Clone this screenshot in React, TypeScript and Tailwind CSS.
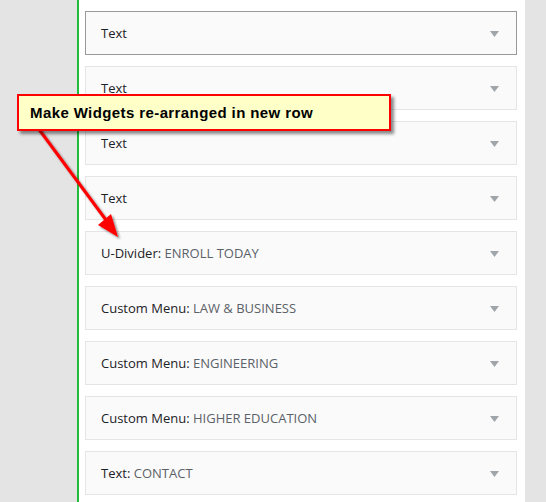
import React from "react";

const items: { title: string; sub?: string }[] = [
  { title: "Text" },
  { title: "Text" },
  { title: "Text" },
  { title: "Text" },
  { title: "U-Divider", sub: "ENROLL TODAY" },
  { title: "Custom Menu", sub: "LAW & BUSINESS" },
  { title: "Custom Menu", sub: "ENGINEERING" },
  { title: "Custom Menu", sub: "HIGHER EDUCATION" },
  { title: "Text", sub: "CONTACT" },
];

function Card({ title, sub, active }: { title: string; sub?: string; active?: boolean }) {
  return (
    <div
      className={`flex h-[44px] w-[432px] shrink-0 items-center justify-between border bg-[#fafafa] pl-[15px] pr-[17px] ${
        active ? "border-[#999999]" : "border-[#e5e5e5]"
      }`}
    >
      <div className="text-[13px] leading-none text-[#1d2226]" style={{ fontFamily: '"Open Sans", sans-serif' }}>
        {title}
        {sub && (
          <>
            :<span className="text-[#5a6168]"> {sub}</span>
          </>
        )}
      </div>
      <svg width="9" height="6" viewBox="0 0 9 6" className="mt-[2px]">
        <path d="M0 0 H9 L4.5 6 Z" fill="#a0a5aa" />
      </svg>
    </div>
  );
}

export default function App() {
  return (
    <div className="relative flex h-[502px] w-[546px] overflow-hidden bg-[#e4e4e4]">
      <div className="w-[77px] shrink-0" />
      <div className="w-[2px] shrink-0 bg-[#1fbd3a]" />
      <div className="flex w-[446px] shrink-0 flex-col gap-[11px] bg-white pl-[6px] pt-[11px]">
        {items.map((it, i) => (
          <Card key={i} title={it.title} sub={it.sub} active={i === 0} />
        ))}
      </div>

      {/* Arrow */}
      <svg className="pointer-events-none absolute left-0 top-0" width="546" height="502">
        <defs>
          <filter id="sh" x="-20%" y="-20%" width="140%" height="140%">
            <feDropShadow dx="2" dy="2" stdDeviation="1.2" floodColor="#000" floodOpacity="0.45" />
          </filter>
        </defs>
        <g filter="url(#sh)">
          <line x1="38" y1="128" x2="106" y2="220" stroke="#ff0000" strokeWidth="3" />
          <path d="M118 237 L98 225 L111 214 Z" fill="#ff0000" />
        </g>
      </svg>

      {/* Callout */}
      <div
        className="absolute left-[17px] top-[94px] flex h-[37px] w-[374px] items-center border-2 border-[#ff0000] bg-[#ffffc8] pl-[11px] shadow-[3px_3px_3px_rgba(0,0,0,0.45)]"
      >
        <span
          className="text-[15px] font-bold leading-none tracking-[0.4px] text-black"
          style={{ fontFamily: '"Liberation Sans", Arial, sans-serif' }}
        >
          Make Widgets re-arranged in new row
        </span>
      </div>
    </div>
  );
}
